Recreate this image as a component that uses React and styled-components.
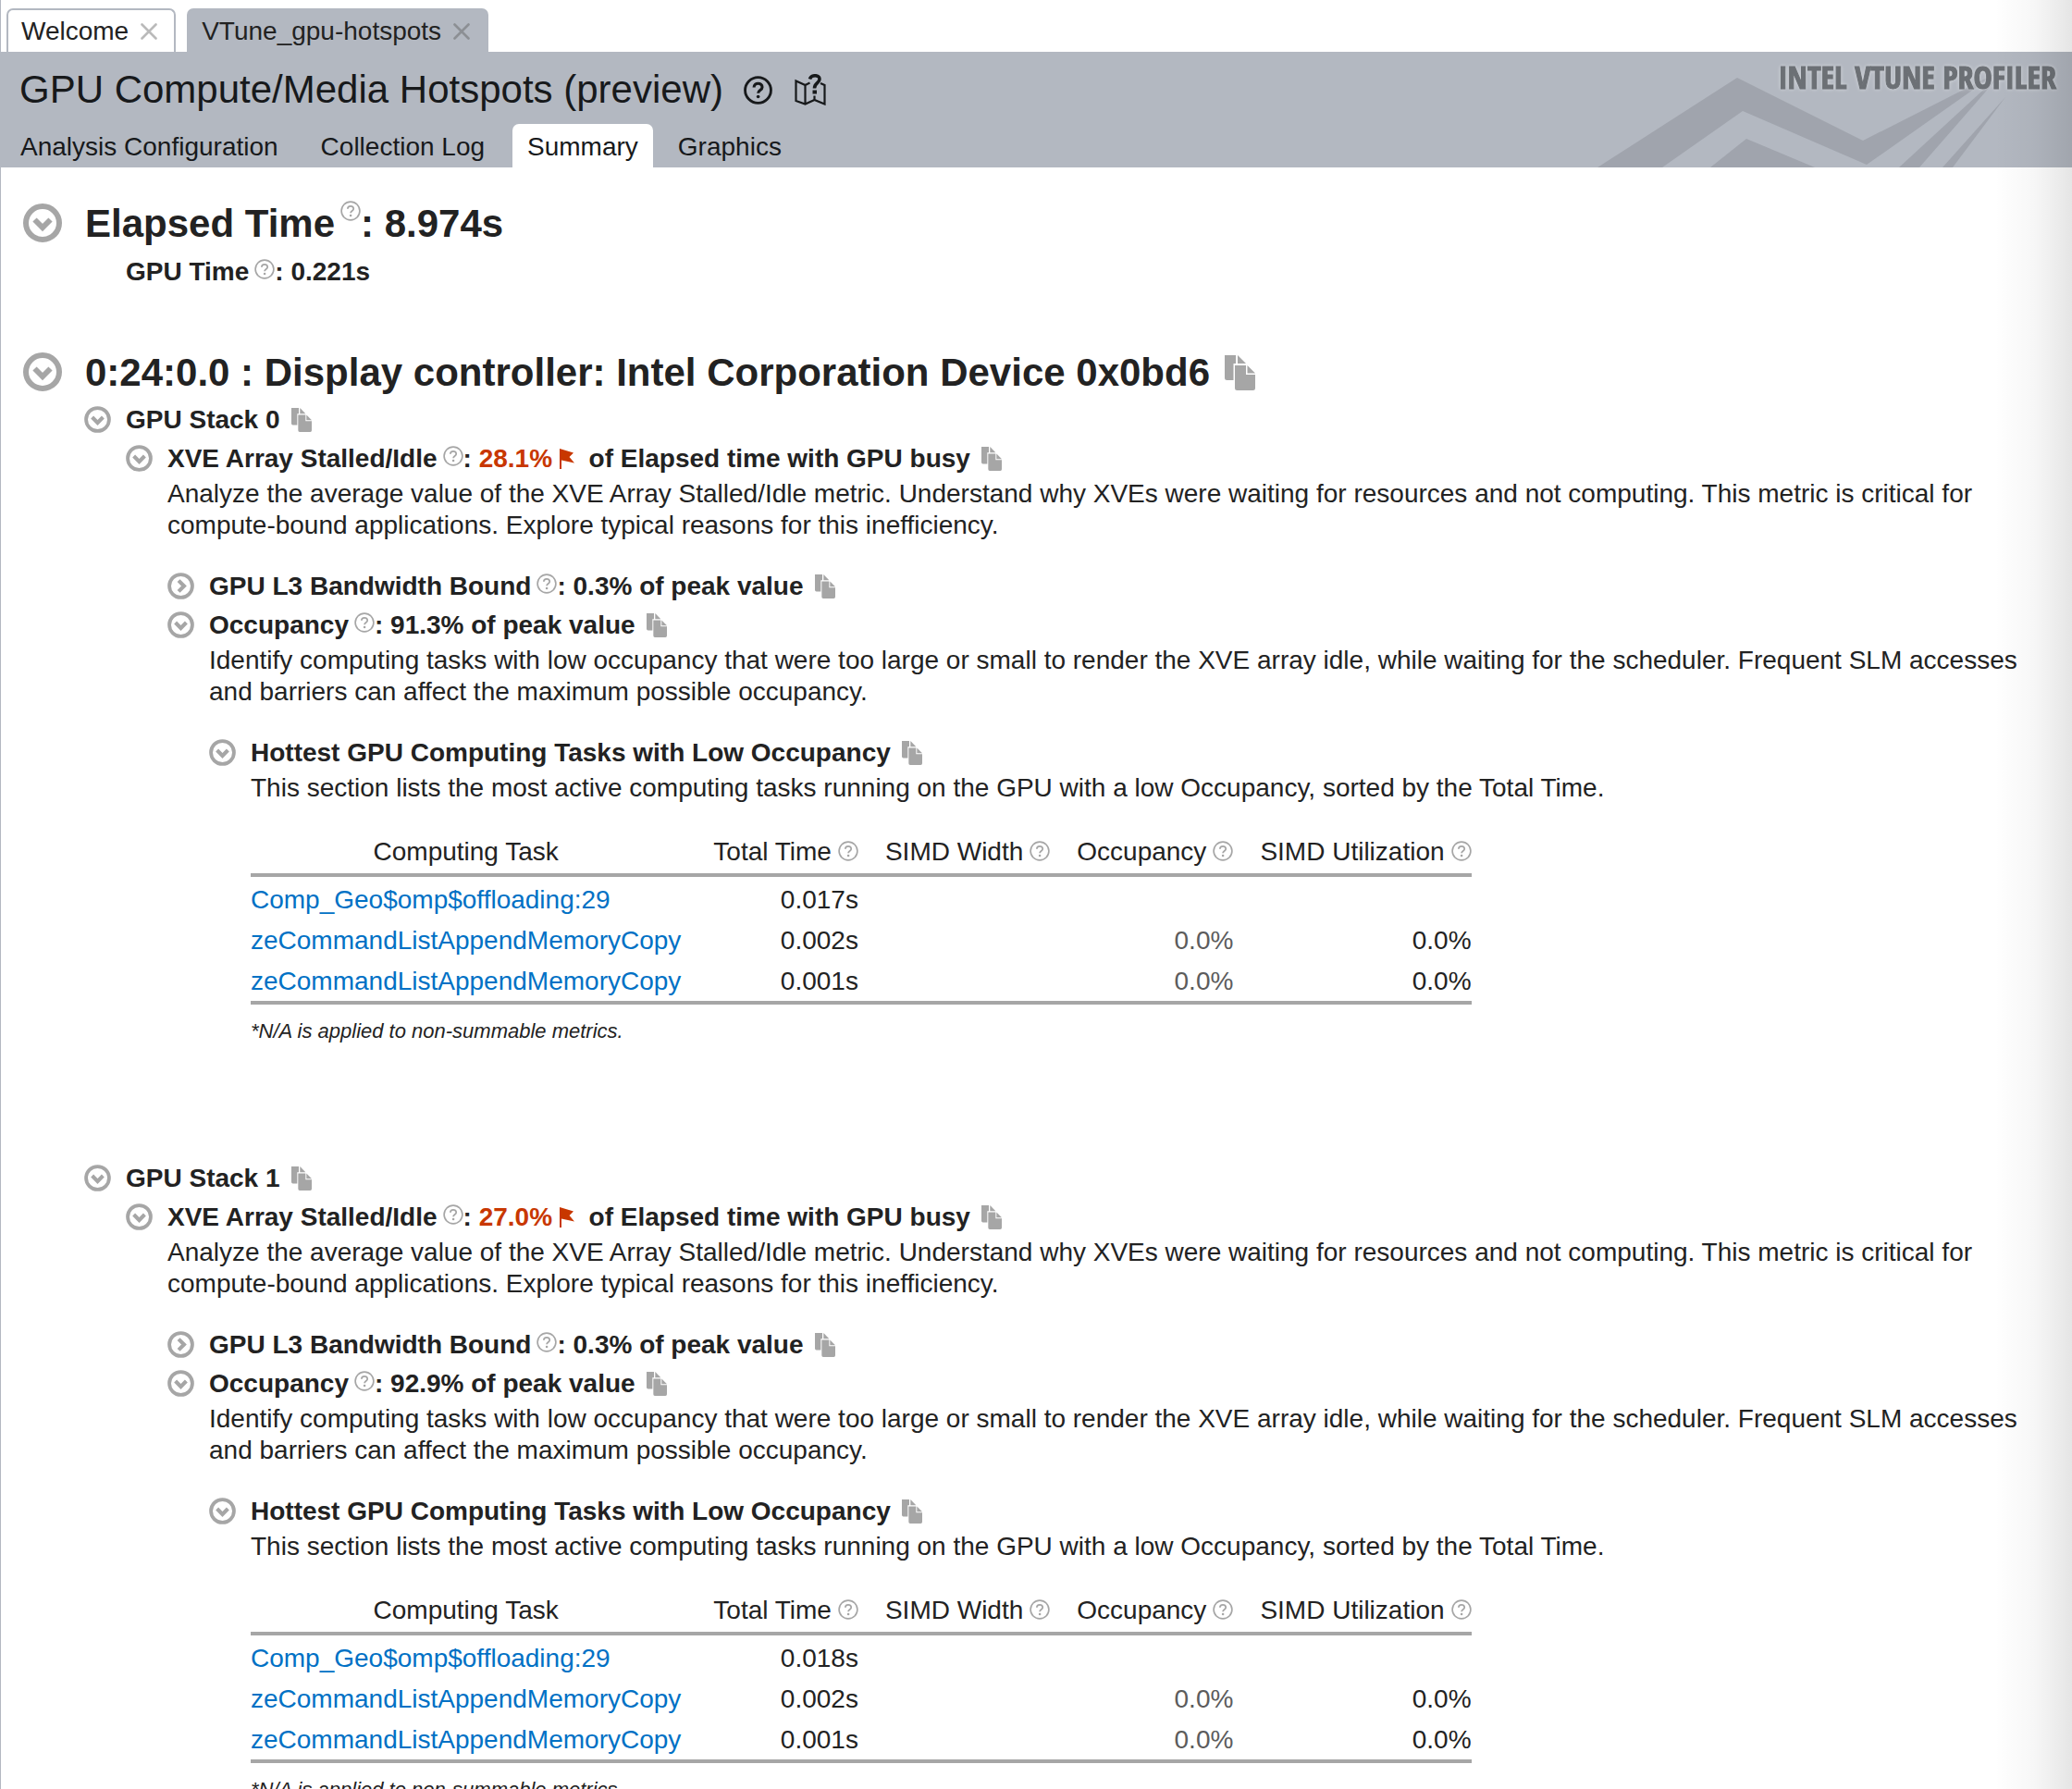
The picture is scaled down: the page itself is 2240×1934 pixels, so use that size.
import React from "react";
import styled, { createGlobalStyle, css } from "styled-components";

const GlobalStyle = createGlobalStyle`
  * { box-sizing: border-box; }
  body {
    margin: 0;
    background: #fff;
    color: #222;
    font-family: "Helvetica Neue", "Liberation Sans", Arial, sans-serif;
    font-size: 28px;
    line-height: 34px;
    overflow: hidden;
  }
  h1, h2, h3, p { margin: 0; }
  button { font: inherit; color: inherit; background: none; border: 0; padding: 0; margin: 0; }
`;

const Page = styled.div`
  position: relative;
  height: 100vh;
  overflow: hidden;
  border-left: 1px solid #b3b8c1;
`;

const EdgeShade = styled.div`
  position: absolute;
  top: 0;
  right: 0;
  bottom: 0;
  width: 84px;
  pointer-events: none;
  background: linear-gradient(to right, rgba(0, 0, 0, 0), rgba(0, 0, 0, 0.03) 50%, rgba(0, 0, 0, 0.1));
`;

const FileTabs = styled.nav`
  display: flex;
  gap: 12px;
  padding: 9px 6px 0;
`;

const FileTab = styled.div`
  display: flex;
  align-items: center;
  gap: 13px;
  height: 47px;
  padding: 0 18px 0 14px;
  border: 2px solid #b3b8c1;
  border-bottom: 0;
  border-radius: 7px 7px 0 0;
  background: ${(p) => (p.$active ? "#b3b8c1" : "#fff")};
`;

const CloseButton = styled.button`
  display: flex;
  color: ${(p) => (p.$active ? "#8c8f94" : "#bababa")};
`;

const Header = styled.header`
  position: relative;
  height: 125px;
  padding-left: 20px;
  background: #b3b8c1;
  color: #17191b;
  display: flex;
  flex-direction: column;
  justify-content: space-between;
  overflow: hidden;
`;

const TitleRow = styled.div`
  display: flex;
  align-items: center;
  padding-top: 16px;
`;

const Title = styled.h1`
  font-size: 42px;
  line-height: 50px;
  font-weight: 400;
`;

const TitleButton = styled.button`
  display: flex;
  margin-left: ${(p) => p.$gap}px;
`;

const Views = styled.nav`
  display: flex;
  margin-left: -15px;
`;

const ViewTab = styled.button`
  height: 47px;
  padding: 3px 16px 0;
  border-radius: 7px 7px 0 0;
  margin-right: 14px;
  ${(p) =>
    p.$active &&
    css`
      background: #fff;
      margin-right: 11px;
    `}
`;

const BrandArt = styled.svg`
  position: absolute;
  right: 0;
  top: 0;
  width: 540px;
  height: 125px;
`;

const BrandName = styled.text`
  fill: #6c7075;
  stroke: #6c7075;
  stroke-width: 1px;
  font-family: "Noto Sans ExtraCondensed", "Open Sans Condensed", "Liberation Sans Narrow", "Liberation Sans", sans-serif;
  font-weight: 700;
  font-size: 34px;
  text-anchor: end;
  filter: drop-shadow(0 0 2px #d5d8dc);
`;

const Content = styled.main`
  padding: 31px 32px 0 24px;
`;

const Group = styled.section`
  margin-bottom: ${(p) => p.$after || 0}px;
`;

const Line = styled.div`
  display: flex;
  align-items: center;
  gap: ${(p) => (p.$large ? 25 : 16)}px;
  min-height: ${(p) => (p.$large ? 60 : 42)}px;
`;

const Toggle = styled.button`
  display: flex;
  flex: none;
  padding-bottom: 2px;
`;

const Heading = styled.h2`
  display: flex;
  align-items: center;
  font-size: ${(p) => (p.$large ? 42 : 28)}px;
  line-height: ${(p) => (p.$large ? 50 : 34)}px;
  font-weight: 700;
  white-space: pre;
`;

const Nested = styled.div`
  padding-left: ${(p) => (p.$large ? 66 : 45)}px;
`;

const Metric = styled.div`
  display: flex;
  align-items: center;
  min-height: 43px;
  padding-left: 45px;
`;

const Description = styled.p`
  margin-bottom: ${(p) => (p.$after ? 28 : 0)}px;
`;

const HelpButton = styled.button`
  display: inline-flex;
  margin-left: ${(p) => (p.$raised ? 6 : 7)}px;
  padding-bottom: ${(p) => (p.$large ? 28 : p.$raised ? 6 : 0)}px;
  vertical-align: ${(p) => (p.$raised ? "baseline" : "-1px")};
`;

const CopyButton = styled.button`
  display: flex;
  margin-left: ${(p) => (p.$large ? 16 : 12)}px;
`;

const Alert = styled.span`
  display: inline-flex;
  align-items: center;
  gap: 8px;
  color: #c83700;
`;

const TaskTable = styled.table`
  margin-top: 28px;
  border-collapse: collapse;
  border-bottom: 4px solid #a6a6a6;
  thead { border-bottom: 4px solid #a6a6a6; }
  tbody tr:first-child td { padding-top: 3px; height: 48px; }
`;

const Head = styled.th`
  height: 49px;
  padding: 0 ${(p) => (p.$first ? 6 : 0)}px 0 ${(p) => (p.$first ? 0 : 29)}px;
  font-weight: 400;
  text-align: ${(p) => (p.$first ? "center" : "right")};
  white-space: nowrap;
`;

const Cell = styled.td`
  height: 45px;
  padding: 0 ${(p) => (p.$first ? 6 : 0)}px 0 0;
  text-align: ${(p) => (p.$first ? "left" : "right")};
  color: ${(p) => (p.$muted ? "#5c5c5c" : "inherit")};
`;

const TaskLink = styled.a`
  color: #0071c5;
  text-decoration: none;
`;

const Note = styled.p`
  padding: 15px 0 124px;
  font-size: 22px;
  line-height: 28px;
  font-style: italic;
`;

const QuestionMark = ({ size, weight = 1.8 }) => (
  <svg width={size} height={size} viewBox="0 0 24 24" fill="none" stroke="currentColor" strokeWidth={weight}>
    <circle cx="12" cy="12" r="10.8" />
    <path d="M8.6 9.6c0-4.3 6.9-4.3 6.9-.1 0 2.6-3.4 2.5-3.4 5" strokeWidth={weight * 1.1} />
    <circle cx="12.1" cy="17.4" r="1.4" fill="currentColor" stroke="none" />
  </svg>
);

const GreyIcon = styled.span`
  display: flex;
  color: #a6a6a6;
`;

const Help = ({ label, raised, large }) => (
  <HelpButton $raised={raised} $large={large} aria-label={`Help on ${label}`}>
    <GreyIcon>
      <QuestionMark size={22} />
    </GreyIcon>
  </HelpButton>
);

const Copy = ({ large }) => (
  <CopyButton $large={large} aria-label="Copy to clipboard">
    <svg width={large ? 33 : 22} height={large ? 38 : 26} viewBox="0 0 33 38" preserveAspectRatio="none" fill="#a6a6a6">
      <path d="M0 0h12v9H9.5v18H2.5Q0 27 0 24.500Z" />
      <path d="M14 0l9 9h-9Z" />
      <path d="M11 11h12v10h10v14.500Q33 38 30.500 38h-17Q11 38 11 35.500Z" />
      <path d="M24.500 11L33 19.500h-8.500Z" />
    </svg>
  </CopyButton>
);

const Chevron = ({ large, closed }) => (
  <Toggle aria-label={closed ? "Expand section" : "Collapse section"} aria-expanded={!closed}>
    <svg width={large ? 42 : 29} height={large ? 42 : 29} viewBox="0 0 42 42" fill="none" stroke="#a6a6a6">
      <circle cx="21" cy="21" r="18" strokeWidth={large ? 6 : 5.5} />
      <path d={closed ? "M17.500 12.500L26 21L17.500 29.500" : "M12.500 17.500L21 26L29.500 17.500"} strokeWidth="6" />
    </svg>
  </Toggle>
);

const Cross = () => (
  <svg width="18" height="18" viewBox="0 0 18 18" fill="none" stroke="currentColor" strokeWidth="2.6" strokeLinecap="round">
    <path d="M1.500 1.500L16.500 16.500M16.500 1.500L1.500 16.500" />
  </svg>
);

const GuideIcon = () => (
  <svg width="34" height="34" viewBox="0 0 34 34" fill="none" stroke="currentColor" strokeWidth="2.2">
    <path d="M16.500 9.500L11.500 12L1.500 7.500V29L11.500 32.500L21.500 28L32.500 32.500V12L28 10M11.500 12V32M21.500 23.500V28" />
    <path d="M16.500 5.500C18 .5 27 .5 27 5.500C27 10 21.500 9.500 21.500 15.500" strokeWidth="3.600" />
    <path d="M19.500 17.500h4.500v4h-4.500Z" fill="currentColor" stroke="none" />
  </svg>
);

const Brand = () => (
  <BrandArt viewBox="0 0 540 125">
    <g fill="#a0a4ad">
      <path d="M27 125L178 28L314 96L460 22L318 122L184 64L97 125Z" />
      <path d="M149 125L188 94L262 125Z" />
      <path d="M353 125L466 21L375 125Z" />
      <path d="M400 125L468 49L411 125Z" />
    </g>
    <BrandName x="523" y="40">INTEL VTUNE PROFILER</BrandName>
  </BrandArt>
);

const columns = ["Total Time", "SIMD Width", "Occupancy", "SIMD Utilization"];

const stacks = [
  { name: "GPU Stack 0", stalled: "28.1%", l3: "0.3%", occupancy: "91.3%", times: ["0.017s", "0.002s", "0.001s"] },
  { name: "GPU Stack 1", stalled: "27.0%", l3: "0.3%", occupancy: "92.9%", times: ["0.018s", "0.002s", "0.001s"] },
];

const tasks = [
  { name: "Comp_Geo$omp$offloading:29", share: "" },
  { name: "zeCommandListAppendMemoryCopy", share: "0.0%" },
  { name: "zeCommandListAppendMemoryCopy", share: "0.0%" },
];

const Tasks = ({ times }) => (
  <TaskTable>
    <thead>
      <tr>
        <Head $first scope="col">Computing Task</Head>
        {columns.map((c) => (
          <Head key={c} scope="col">
            {c}
            <Help label={c} />
          </Head>
        ))}
      </tr>
    </thead>
    <tbody>
      {tasks.map((t, i) => (
        <tr key={i}>
          <Cell $first>
            <TaskLink href="#task">{t.name}</TaskLink>
          </Cell>
          <Cell>{times[i]}</Cell>
          <Cell />
          <Cell $muted>{t.share}</Cell>
          <Cell>{t.share}</Cell>
        </tr>
      ))}
    </tbody>
  </TaskTable>
);

const Stack = ({ data }) => (
  <Group>
    <Line>
      <Chevron />
      <Heading as="h3">{data.name}<Copy /></Heading>
    </Line>
    <Nested>
      <Line>
        <Chevron />
        <Heading as="h3">
          XVE Array Stalled/Idle
          <Help raised label="XVE Array Stalled/Idle" />
          {": "}
          <Alert>
            {data.stalled}
            <svg width="16" height="22" viewBox="0 0 16 22" fill="#c83700">
              <path d="M0 0L15 4.500L10.500 9L16 15.500L2 12.500V22H0Z" />
            </svg>
          </Alert>
          {"  of Elapsed time with GPU busy"}
          <Copy />
        </Heading>
      </Line>
      <Nested>
        <Description $after>
          Analyze the average value of the XVE Array Stalled/Idle metric. Understand why XVEs were waiting for resources
          and not computing. This metric is critical for compute-bound applications. Explore typical reasons for this
          inefficiency.
        </Description>
        <Line>
          <Chevron closed />
          <Heading as="h3">
            GPU L3 Bandwidth Bound
            <Help raised label="GPU L3 Bandwidth Bound" />
            {`: ${data.l3} of peak value`}
            <Copy />
          </Heading>
        </Line>
        <Line>
          <Chevron />
          <Heading as="h3">
            Occupancy
            <Help raised label="Occupancy" />
            {`: ${data.occupancy} of peak value`}
            <Copy />
          </Heading>
        </Line>
        <Nested>
          <Description $after>
            Identify computing tasks with low occupancy that were too large or small to render the XVE array idle, while
            waiting for the scheduler. Frequent SLM accesses and barriers can affect the maximum possible occupancy.
          </Description>
          <Line>
            <Chevron />
            <Heading as="h3">Hottest GPU Computing Tasks with Low Occupancy<Copy /></Heading>
          </Line>
          <Nested>
            <Description>
              This section lists the most active computing tasks running on the GPU with a low Occupancy, sorted by the
              Total Time.
            </Description>
            <Tasks times={data.times} />
            <Note>*N/A is applied to non-summable metrics.</Note>
          </Nested>
        </Nested>
      </Nested>
    </Nested>
  </Group>
);

export default function App() {
  return (
    <Page>
      <GlobalStyle />
      <FileTabs>
        <FileTab>
          Welcome
          <CloseButton aria-label="Close Welcome"><Cross /></CloseButton>
        </FileTab>
        <FileTab $active>
          VTune_gpu-hotspots
          <CloseButton $active aria-label="Close VTune_gpu-hotspots"><Cross /></CloseButton>
        </FileTab>
      </FileTabs>
      <Header>
        <Brand />
        <TitleRow>
          <Title>GPU Compute/Media Hotspots (preview)</Title>
          <TitleButton $gap={22} aria-label="Help"><QuestionMark size={31} weight={2.2} /></TitleButton>
          <TitleButton $gap={24} aria-label="Guided tour"><GuideIcon /></TitleButton>
        </TitleRow>
        <Views>
          <ViewTab>Analysis Configuration</ViewTab>
          <ViewTab>Collection Log</ViewTab>
          <ViewTab $active>Summary</ViewTab>
          <ViewTab>Graphics</ViewTab>
        </Views>
      </Header>
      <Content>
        <Group $after={58}>
          <Line $large>
            <Chevron large />
            <Heading $large>
              Elapsed Time
              <Help raised large label="Elapsed Time" />
              : 8.974s
            </Heading>
          </Line>
          <Nested $large>
            <Metric>
              <Heading as="h3">
                GPU Time
                <Help raised label="GPU Time" />
                : 0.221s
              </Heading>
            </Metric>
          </Nested>
        </Group>
        <Group>
          <Line $large>
            <Chevron large />
            <Heading $large>
              0:24:0.0 : Display controller: Intel Corporation Device 0x0bd6
              <Copy large />
            </Heading>
          </Line>
          <Nested $large>
            {stacks.map((s) => (
              <Stack key={s.name} data={s} />
            ))}
          </Nested>
        </Group>
      </Content>
      <EdgeShade />
    </Page>
  );
}
